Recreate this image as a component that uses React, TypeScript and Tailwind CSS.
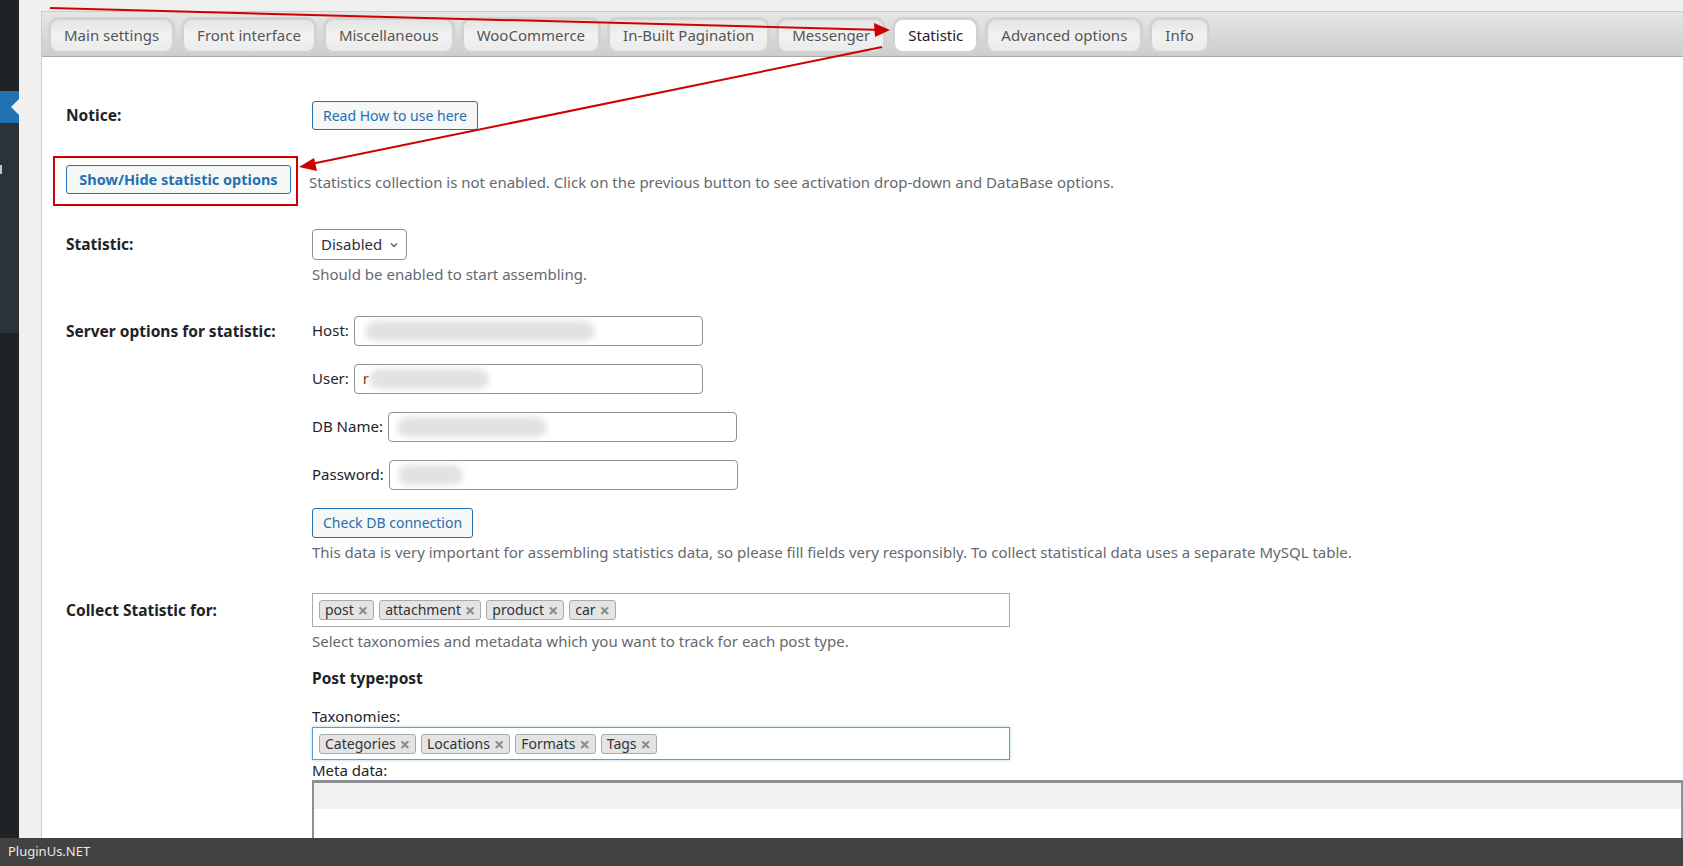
import React from 'react';

const tabs = [
  'Main settings',
  'Front interface',
  'Miscellaneous',
  'WooCommerce',
  'In-Built Pagination',
  'Messenger',
  'Statistic',
  'Advanced options',
  'Info',
];

const Tag = ({ label }: { label: string }) => (
  <span className="inline-flex h-[20px] items-center gap-[4px] rounded-[3px] border border-[#aaa] bg-[#e4e4e4] px-[5px] text-[14px] leading-none text-[#333]">
    {label}
    <span className="text-[18px] font-bold leading-none text-[#8a8a8a]">×</span>
  </span>
);

const Field = ({ label, blurLeft, blurWidth, prefix }: { label: string; blurLeft: number; blurWidth: string; prefix?: string }) => (
  <div className="flex items-center gap-[5px]">
    <span className="text-[15px] text-[#1d2327]">{label}</span>
    <div className="flex h-[30px] w-[349px] items-center rounded-[4px] border border-[#8c8f94] bg-white px-[8px]">
      {prefix && <span className="text-[15px] text-[#8a1a1a]">{prefix}</span>}
      <span className={`h-[20px] rounded-full bg-[#e2e2e2] blur-[3px] ${blurWidth}`} style={{ marginLeft: blurLeft }} />
    </div>
  </div>
);

export default function App() {
  return (
    <div className="relative flex h-screen flex-col overflow-hidden bg-[#f0f0f1] font-['Noto_Sans',sans-serif]">
      <div className="flex min-h-0 flex-1">
        {/* admin menu strip */}
        <div className="flex w-[19px] flex-col bg-[#1d2327]">
          <div className="h-[91px]" />
          <div className="relative h-[32px] bg-[#2271b1]">
            <span className="absolute right-0 top-[8px] h-0 w-0 border-y-[8px] border-r-[8px] border-y-transparent border-r-[#f0f0f1]" />
          </div>
          <div className="h-[210px] bg-[#2c3338] pt-[42px]">
            <div className="h-[9px] w-[2px] bg-[#c3c4c7]" />
          </div>
        </div>

        <div className="min-w-0 flex-1 pl-[22px] pt-[11px]">
          <div className="h-full border-l border-t border-[#ccc] bg-white">
            {/* tab bar */}
            <div className="flex h-[45px] items-start gap-[6px] border-b border-[#aaa] bg-gradient-to-b from-[#e6e6e6] to-[#cdcdcd] pl-[6px] pt-[5px]">
              {tabs.map((t) => (
                <div
                  key={t}
                  className={`flex h-[37px] items-center rounded-[11px] border-[3px] border-[#d2d2d2] px-[13px] text-[15px] ${
                    t === 'Statistic'
                      ? 'bg-white text-[#212121]'
                      : 'bg-gradient-to-b from-[#e4e4e4] via-[#f2f2f2] to-[#ebebeb] text-[#555]'
                  }`}
                >
                  {t}
                </div>
              ))}
            </div>

            {/* settings table */}
            <div className="grid grid-cols-[246px_1fr] pl-[24px] text-[15px] text-[#1d2327]">
              <div className="pt-[44px] text-[15.5px] font-bold leading-[29px]">Notice:</div>
              <div className="pt-[44px]">
                <button className="h-[29px] rounded-[3px] border border-[#2271b1] bg-[#f6f7f7] px-[10px] text-[14px] text-[#2271b1]">
                  Read How to use here
                </button>
              </div>

              <div className="col-span-2 mt-[26px] flex items-center">
                <div className="-ml-[13px] border-2 border-[#d10000] pb-[10px] pl-[11px] pr-[5px] pt-[7px]">
                  <button className="h-[29px] w-[225px] rounded-[3px] border border-[#2271b1] bg-[#f6f7f7] text-[14.5px] font-bold text-[#2271b1]">
                    Show/Hide statistic options
                  </button>
                </div>
                <span className="ml-[11px] mt-[2px] text-[#646970]">
                  Statistics collection is not enabled. Click on the previous button to see activation drop-down and DataBase options.
                </span>
              </div>

              <div className="pt-[23px] text-[15.5px] font-bold leading-[31px]">Statistic:</div>
              <div className="pt-[23px]">
                <div className="flex h-[31px] w-[95px] items-center justify-between rounded-[4px] border border-[#8c8f94] pl-[8px] pr-[7px] text-[#2c3338]">
                  Disabled
                  <svg width="10" height="10" viewBox="0 0 10 10" fill="none" stroke="#50575e" strokeWidth="1.3">
                    <path d="M2 3.5 5 6.5 8 3.5" />
                  </svg>
                </div>
                <p className="mt-[3px] text-[#646970]">Should be enabled to start assembling.</p>
              </div>

              <div className="pt-[30px] text-[15.5px] font-bold leading-[30px]">Server options for statistic:</div>
              <div className="flex flex-col items-start gap-[18px] pt-[30px]">
                <Field label="Host:" blurLeft={2} blurWidth="w-[230px]" />
                <Field label="User:" prefix="r" blurLeft={0} blurWidth="w-[120px]" />
                <Field label="DB Name:" blurLeft={0} blurWidth="w-[150px]" />
                <Field label="Password:" blurLeft={0} blurWidth="w-[65px]" />
                <div>
                  <button className="h-[30px] rounded-[3px] border border-[#2271b1] bg-[#f6f7f7] px-[10px] text-[14px] text-[#2271b1]">
                    Check DB connection
                  </button>
                  <p className="mt-[3px] text-[#646970]">
                    This data is very important for assembling statistics data, so please fill fields very responsibly. To collect statistical data uses a separate MySQL table.
                  </p>
                </div>
              </div>

              <div className="pt-[30px] text-[15.5px] font-bold leading-[34px]">Collect Statistic for:</div>
              <div className="pt-[30px]">
                <div className="flex h-[34px] w-[698px] items-center gap-[5px] border border-[#aaa] px-[6px]">
                  <Tag label="post" />
                  <Tag label="attachment" />
                  <Tag label="product" />
                  <Tag label="car" />
                </div>
                <p className="mt-[3px] text-[#646970]">Select taxonomies and metadata which you want to track for each post type.</p>
                <p className="mt-[14px] text-[15.5px] font-bold">Post type:post</p>
                <p className="mt-[15px]">Taxonomies:</p>
                <div className="flex h-[33px] w-[698px] items-center gap-[5px] border border-[#5b9dd9] px-[6px] shadow-[0_0_3px_rgba(30,140,190,0.4)]">
                  <Tag label="Categories" />
                  <Tag label="Locations" />
                  <Tag label="Formats" />
                  <Tag label="Tags" />
                </div>
                <p className="leading-[20px]">Meta data:</p>
                <div className="h-[80px] border-x-2 border-t-[3px] border-[#8c8f94]">
                  <div className="h-[26px] bg-[#f1f1f1]" />
                </div>
              </div>
            </div>
          </div>
        </div>
      </div>

      <div className="flex h-[28px] items-center bg-[#424242] px-[8px] text-[13px] text-[#e8e8e8]">PluginUs.NET</div>

      {/* annotation arrows */}
      <svg className="pointer-events-none absolute inset-0" width="1683" height="866">
        <line x1="50" y1="8" x2="884" y2="30" stroke="#d10000" strokeWidth="2" />
        <path d="M890 30 874 23 875 37z" fill="#d10000" />
        <line x1="882" y1="47" x2="306" y2="165" stroke="#d10000" strokeWidth="2" />
        <path d="M299 167 314 158 317 171z" fill="#d10000" />
      </svg>
    </div>
  );
}
